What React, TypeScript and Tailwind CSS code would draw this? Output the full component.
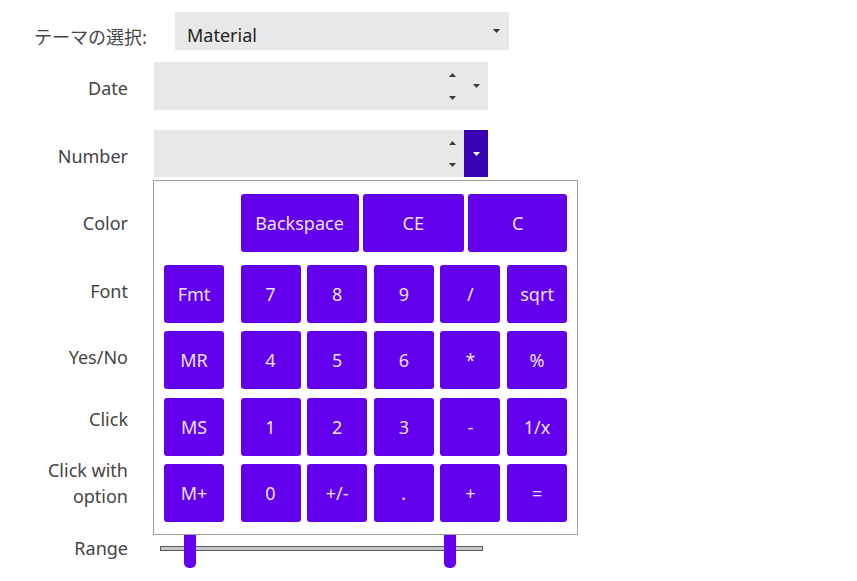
import React from "react";

const Up = ({ c = "#3a3a3a" }: { c?: string }) => (
  <svg width="7" height="4" viewBox="0 0 7 4"><polygon points="0,4 7,4 3.5,0" fill={c} /></svg>
);
const Down = ({ c = "#3a3a3a" }: { c?: string }) => (
  <svg width="7" height="4" viewBox="0 0 7 4"><polygon points="0,0 7,0 3.5,4" fill={c} /></svg>
);

const Btn = ({ children, className = "" }: { children: React.ReactNode; className?: string }) => (
  <div className={`bg-[#6200ee] text-[#ece2ff] rounded-[3px] flex items-center justify-center h-[58px] ${className}`}>{children}</div>
);

function Label({ children, className = "" }: { children: React.ReactNode; className?: string }) {
  return <div className={`w-[128px] text-right shrink-0 ${className}`}>{children}</div>;
}

export default function App() {
  const rows = [
    ["Fmt", "7", "8", "9", "/", "sqrt"],
    ["MR", "4", "5", "6", "*", "%"],
    ["MS", "1", "2", "3", "-", "1/x"],
    ["M+", "0", "+/-", ".", "+", "="],
  ];
  return (
    <div className="w-[857px] h-[581px] bg-white text-[#444] text-[18px] leading-none font-['Noto_Sans','Noto_Sans_CJK_JP',sans-serif] overflow-hidden">
      <div className="flex flex-col pt-3">
        {/* Theme */}
        <div className="flex items-center h-[38px] pl-[34px]">
          <span className="w-[115px] shrink-0 whitespace-nowrap font-['Noto_Sans_CJK_JP',sans-serif] pt-[9px]">テーマの選択:</span>
          <div className="ml-[26px] w-[334px] h-[38px] bg-[#e8e8e8] flex items-center pl-3 pr-[9px] text-[#222]">
            <span className="flex-1 pt-[8px]">Material</span>
            <Down c="#333" />
          </div>
        </div>

        {/* Date */}
        <div className="flex items-center h-[48px] mt-3">
          <Label className="pt-[3px]">Date</Label>
          <div className="ml-[26px] w-[334px] h-[48px] bg-[#e8e8e8] flex">
            <div className="flex-1" />
            <div className="w-[24px] flex flex-col items-center justify-center gap-[19px] pt-[1px]"><Up /><Down /></div>
            <div className="w-[24px] flex items-center justify-center"><Down /></div>
          </div>
        </div>

        {/* Number */}
        <div className="flex items-center h-[47px] mt-5">
          <Label className="pt-[4px]">Number</Label>
          <div className="ml-[26px] relative flex h-[47px]">
            <div className="w-[310px] bg-[#e8e8e8] flex">
              <div className="flex-1" />
              <div className="w-[24px] flex flex-col items-center justify-center gap-[18px]"><Up /><Down /></div>
            </div>
            <div className="w-[24px] bg-[#3700b3] flex items-center justify-center"><Down c="#fff" /></div>

            {/* Calculator popup */}
            <div className="absolute z-10 left-[-1px] top-[50px] w-[425px] h-[355px] bg-white border border-[#a0a0a0] pt-[13px] pl-[10px] text-[#ece2ff]">
              <div className="flex">
                <div className="w-[60px] mr-[16.5px]" />
                <div className="flex gap-[4.3px]">
                  <Btn className="w-[118px]">Backspace</Btn>
                  <Btn className="w-[101px]">CE</Btn>
                  <Btn className="w-[99px]">C</Btn>
                </div>
              </div>
              <div className="flex flex-col gap-[8.3px] mt-[13px]">
                {rows.map((r, i) => (
                  <div key={i} className="flex">
                    <Btn className="w-[60px] mr-[16.5px]">{r[0]}</Btn>
                    <div className="grid grid-cols-[repeat(5,60px)] gap-x-[6.65px]">
                      {r.slice(1).map((k) => (
                        <Btn key={k}>{k}</Btn>
                      ))}
                    </div>
                  </div>
                ))}
              </div>
            </div>
          </div>
        </div>

        {/* Other rows */}
        <div className="flex items-center h-[66px] mt-[13px]"><Label>Color</Label></div>
        <div className="flex items-center h-[70px]"><Label>Font</Label></div>
        <div className="flex items-center h-[62px]"><Label>Yes/No</Label></div>
        <div className="flex items-center h-[62px]"><Label>Click</Label></div>
        <div className="flex items-center h-[66px]">
          <Label className="leading-[26px]">Click with<br />option</Label>
        </div>
        <div className="flex items-center h-[64px]">
          <Label>Range</Label>
          <div className="ml-[32px] relative w-[323px] h-[5px] bg-[#c8c8c8] border border-[#5a5a5a]">
            <div className="absolute left-[23px] top-[-20px] w-[12px] h-[41px] bg-[#6200ee] rounded-[5px]" />
            <div className="absolute left-[283px] top-[-20px] w-[12px] h-[41px] bg-[#6200ee] rounded-[5px]" />
          </div>
        </div>
      </div>
    </div>
  );
}
